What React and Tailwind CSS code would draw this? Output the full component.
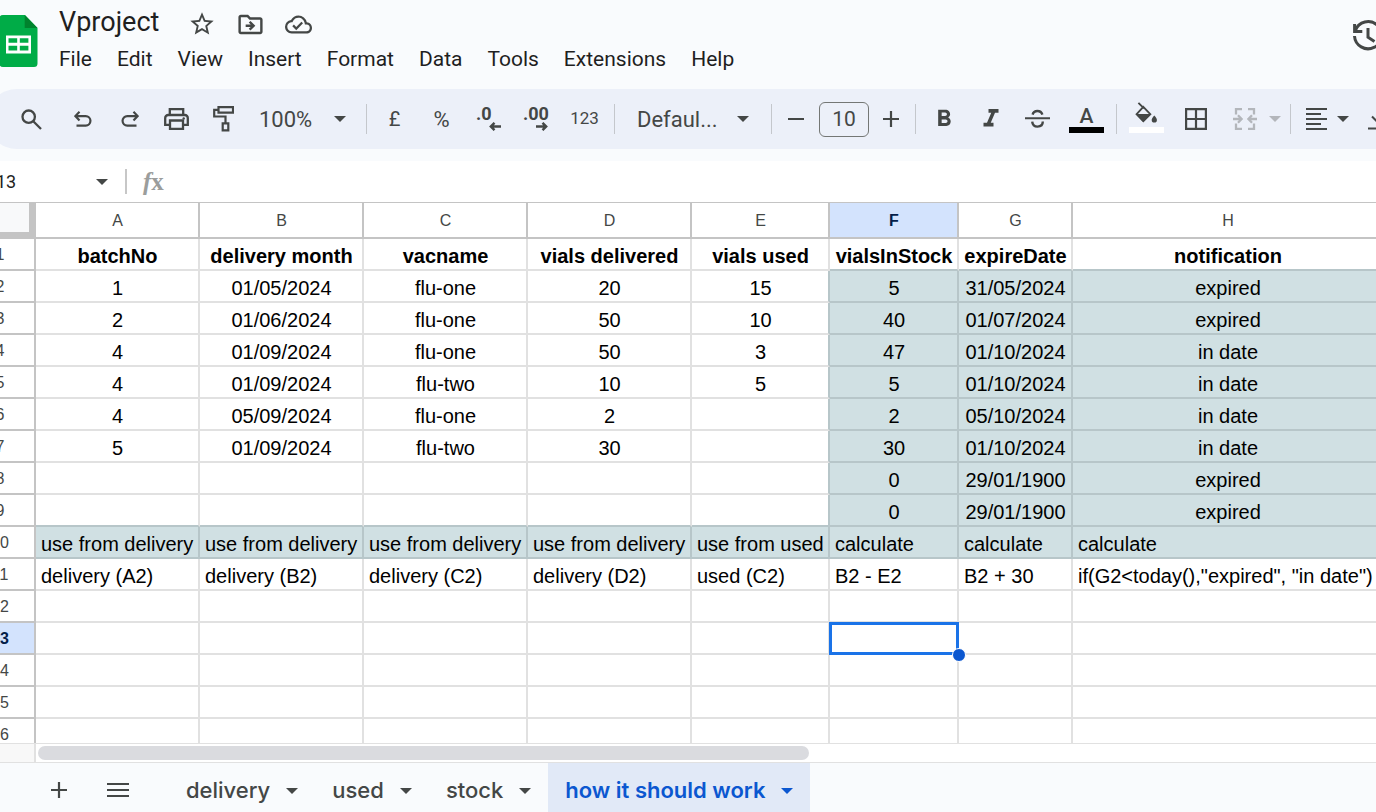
import React from "react";
import { MdFormatBold, MdFormatItalic, MdStarOutline, MdOutlineDriveFileMove, MdOutlineCloudDone } from "react-icons/md";

const columns = [
  { id: "A", width: "w-[164px]" },
  { id: "B", width: "w-[164px]" },
  { id: "C", width: "w-[164px]" },
  { id: "D", width: "w-[164px]" },
  { id: "E", width: "w-[138px]" },
  { id: "F", width: "w-[129px]" },
  { id: "G", width: "w-[114px]" },
  { id: "H", width: "w-[311px]" },
];

const rows = [
  ["batchNo", "delivery month", "vacname", "vials delivered", "vials used", "vialsInStock", "expireDate", "notification"],
  ["1", "01/05/2024", "flu-one", "20", "15", "5", "31/05/2024", "expired"],
  ["2", "01/06/2024", "flu-one", "50", "10", "40", "01/07/2024", "expired"],
  ["4", "01/09/2024", "flu-one", "50", "3", "47", "01/10/2024", "in date"],
  ["4", "01/09/2024", "flu-two", "10", "5", "5", "01/10/2024", "in date"],
  ["4", "05/09/2024", "flu-one", "2", "", "2", "05/10/2024", "in date"],
  ["5", "01/09/2024", "flu-two", "30", "", "30", "01/10/2024", "in date"],
  ["", "", "", "", "", "0", "29/01/1900", "expired"],
  ["", "", "", "", "", "0", "29/01/1900", "expired"],
  ["use from delivery", "use from delivery", "use from delivery", "use from delivery", "use from used", "calculate", "calculate", "calculate"],
  ["delivery (A2)", "delivery (B2)", "delivery (C2)", "delivery (D2)", "used (C2)", "B2 - E2", "B2 + 30", 'if(G2<today(),"expired", "in date")'],
  [], [], [], [], [],
];

const menus = ["File", "Edit", "View", "Insert", "Format", "Data", "Tools", "Extensions", "Help"];

const isShaded = (r, c) => r === 9 || (r >= 1 && r <= 8 && c >= 5);
const isSelected = (r, c) => r === 12 && c === 5;

function cellClass(r, c) {
  const here = isShaded(r, c);
  const right = here || isShaded(r, c + 1) ? "border-r-[#b7c6c9]" : "border-r-[#e1e1e1]";
  const bottom = here || isShaded(r + 1, c) ? "border-b-[#b7c6c9]" : "border-b-[#e1e1e1]";
  const align = r < 9 ? "text-center pl-px pr-0" : "text-left pl-[5px] pr-0";
  const weight = r === 0 ? "font-bold" : "font-normal";
  return `relative border-r-2 border-b-2 pb-px align-bottom whitespace-nowrap leading-6 ${right} ${bottom} ${align} ${weight} ${here ? "bg-[#d0e0e3]" : "bg-white"}`;
}

function Caret({ className = "" }) {
  return (
    <svg className={`h-[6px] w-[12px] shrink-0 ${className}`} viewBox="0 0 12 6" fill="currentColor" aria-hidden="true">
      <path d="M0 0h12L6 6z" />
    </svg>
  );
}

function Icon({ w, h, children, sw = 2 }) {
  return (
    <svg className="shrink-0" width={w} height={h} viewBox={`0 0 ${w} ${h}`} fill="none" stroke="currentColor" strokeWidth={sw} aria-hidden="true">
      {children}
    </svg>
  );
}

function Tool({ label, className = "w-[47px]", children }) {
  return (
    <button type="button" aria-label={label} className={`flex h-full shrink-0 items-center justify-center ${className}`}>
      {children}
    </button>
  );
}

function Separator() {
  return <span className="mx-1 h-[30px] w-px shrink-0 bg-[#c4c7cc]" />;
}

function Header() {
  return (
    <header className="flex h-[89px] shrink-0 items-start">
      <svg className="mt-[15px] h-[52px] w-[38px] shrink-0" viewBox="0 0 38 52" aria-hidden="true">
        <path d="M3 0H25L37.5 13V48.5a3.5 3.5 0 0 1-3.5 3.5H3a3.5 3.5 0 0 1-3.5-3.5V3.5A3.5 3.5 0 0 1 3 0z" fill="#00ac47" />
        <path d="M24.7 0 37.5 13H24.7z" fill="#00832d" />
        <path fillRule="evenodd" fill="#fff" d="M6 20.5h25v18H6zM8.5 23.2v4.6h8.7v-4.6zM19.8 23.2v4.6h8.6v-4.6zM8.5 30.7v4.8h8.7v-4.8zM19.8 30.7v4.8h8.6v-4.8z" />
      </svg>
      <div className="ml-5 min-w-0 grow pt-1">
        <div className="flex h-9 items-center text-[#444746]">
          <h1 className="pl-px font-[Roboto,sans-serif] text-[27px] leading-9 text-[#1f1f1f]">Vproject</h1>
          <button type="button" aria-label="Star" className="ml-[29px] mt-1"><MdStarOutline size={28} /></button>
          <button type="button" aria-label="Move" className="ml-5 mt-1"><MdOutlineDriveFileMove size={29} /></button>
          <button type="button" aria-label="Document status" className="ml-5 mt-1"><MdOutlineCloudDone size={27} /></button>
        </div>
        <nav className="flex gap-[25px] pl-px pt-[5px] font-[Roboto,sans-serif] text-[21px] leading-7 text-[#1f1f1f]">
          {menus.map((m) => <button type="button" key={m}>{m}</button>)}
        </nav>
      </div>
      <button type="button" aria-label="Version history" className="-mr-2 mt-5 shrink-0 text-[#444746]">
        <Icon w={32} h={32} sw={3}>
          <path d="M3.3 10.5A13.6 13.6 0 1 1 2.5 16" />
          <path d="M2.6 4V11.6H10.3M16 8V17.2L22.5 21.4" />
        </Icon>
      </button>
    </header>
  );
}

function Toolbar() {
  return (
    <div role="toolbar" aria-label="Main" className="-ml-[13px] flex h-[60px] shrink-0 items-center overflow-hidden rounded-l-full bg-[#ecf0f9] pl-[21px] font-[Roboto,sans-serif] text-[21px] text-[#444746]">
      <Tool label="Search"><Icon w={21} h={21} sw={2.3}><circle cx="7.7" cy="7.7" r="6.2" /><path d="M12 12l8 8" /></Icon></Tool>
      <Tool label="Undo" className="ml-1 w-[47px]"><Icon w={18} h={16} sw={2.2}><path d="M5.5 .8 1.4 5.1 5.5 9.4M1.5 5.1H11.7a4.75 4.75 0 0 1 0 9.5H2.5" /></Icon></Tool>
      <Tool label="Redo"><Icon w={18} h={16} sw={2.2}><path d="M12.5 .8 16.6 5.1 12.5 9.4M16.5 5.1H6.3a4.75 4.75 0 0 0 0 9.5H15.5" /></Icon></Tool>
      <Tool label="Print">
        <Icon w={25} h={22} sw={2.3}>
          <path d="M5.8 6.8V1.1H19.2V6.8M6 16.8H1.2V10a3 3 0 0 1 3-3H20.8a3 3 0 0 1 3 3V16.8H19M6 12.5H19V20.8H6z" />
          <circle cx="19.7" cy="10.4" r="1.2" fill="currentColor" stroke="none" />
        </Icon>
      </Tool>
      <Tool label="Paint format" className="w-[46px]"><Icon w={21} h={26} sw={2.2}><path d="M5.5 1.1H20V6.6H5.5zM5.5 3.8H1.2V10.5H12.5V17M9.7 17.4h5.6v7H9.7z" /></Icon></Tool>
      <label className="relative flex h-full w-[116px] shrink-0 items-center">
        <select aria-label="Zoom" defaultValue="100%" className="h-full w-full appearance-none bg-transparent pl-[13px] text-[22px]">
          <option>100%</option>
        </select>
        <Caret className="pointer-events-none absolute right-4" />
      </label>
      <Separator />
      <Tool label="Format as currency"><span className="text-[20px]">£</span></Tool>
      <Tool label="Format as percent"><span className="text-[22px]">%</span></Tool>
      <Tool label="Decrease decimal places">
        <span className="flex w-[25px] flex-col pb-px">
          <span className="text-left text-[18px] font-bold leading-4">.0</span>
          <span className="flex justify-end"><Icon w={12} h={9} sw={2.4}><path d="M12 4.5H2M5.5 .8 1.8 4.5 5.5 8.2" /></Icon></span>
        </span>
      </Tool>
      <Tool label="Increase decimal places">
        <span className="flex w-[25px] flex-col pb-px">
          <span className="text-left text-[18px] font-bold leading-4">.00</span>
          <span className="flex justify-end"><Icon w={12} h={9} sw={2.4}><path d="M0 4.5H10M6.5 .8 10.2 4.5 6.5 8.2" /></Icon></span>
        </span>
      </Tool>
      <Tool label="More formats" className="w-[51px]"><span className="text-[17px]">123</span></Tool>
      <Separator />
      <label className="relative flex h-full w-[148px] shrink-0 items-center">
        <select aria-label="Font" defaultValue="Defaul..." className="h-full w-full appearance-none bg-transparent pl-[18px] text-[22px]">
          <option>Defaul...</option>
        </select>
        <Caret className="pointer-events-none absolute right-[18px]" />
      </label>
      <Separator />
      <div className="flex h-full shrink-0 items-center gap-1 pr-[3px]">
        <Tool label="Decrease font size" className="w-[35px] pl-1"><Icon w={16} h={16} sw={2.2}><path d="M0 8H16" /></Icon></Tool>
        <input aria-label="Font size" defaultValue="10" className="ml-1 h-[35px] w-[50px] rounded-md border border-[#747775] bg-transparent text-center text-[21px]" />
        <Tool label="Increase font size" className="w-[35px]"><Icon w={16} h={16} sw={2.2}><path d="M0 8H16M8 0V16" /></Icon></Tool>
      </div>
      <Separator />
      <Tool label="Bold"><MdFormatBold size={28} /></Tool>
      <Tool label="Italic"><MdFormatItalic size={30} /></Tool>
      <Tool label="Strikethrough">
        <Icon w={25} h={20} sw={2.4}>
          <path d="M0 9.3H25" strokeWidth="2" />
          <path d="M7.6 5.6C8.2 3.2 10 2 12.4 2s4.2 1.2 5 3.6M7.2 12.6c.3 3.4 2.5 5 5.4 5s5.2-1.5 5.2-5" />
        </Icon>
      </Tool>
      <Tool label="Text color" className="w-[51px]">
        <span className="flex flex-col items-center gap-px">
          <span className="text-[21px] font-medium leading-5">A</span>
          <span className="h-[6px] w-[35px] bg-black" />
        </span>
      </Tool>
      <Separator />
      <Tool label="Fill color" className="w-[51px]">
        <span className="flex flex-col items-center gap-1 pb-1">
          <Icon w={23} h={21} sw={1.9}>
            <path d="M8.3 4.8 15.3 12.2 8.3 19.2 1.6 12.2zM3.4 .8 9 6.4" />
            <path d="M1.2 12h14.4L8.3 20z" fill="currentColor" stroke="none" />
            <path d="M19.3 13.6c1.7 2 2.6 3.2 2.6 4.4a2.6 2.6 0 0 1-5.2 0c0-1.2.9-2.4 2.6-4.4z" fill="currentColor" stroke="none" />
          </Icon>
          <span className="h-[6px] w-[35px] bg-white" />
        </span>
      </Tool>
      <Tool label="Borders"><Icon w={22} h={22} sw={2.2}><path d="M1.1 1.1H20.9V20.9H1.1zM11 1V21M1 11H21" /></Icon></Tool>
      <button type="button" disabled aria-label="Merge cells" className="flex h-full shrink-0 items-center gap-3 pl-[14px] pr-[5px] text-[#b3b6bb]">
        <Icon w={24} h={22} sw={2.3}><path d="M9 1.2H3V6.5M9 20.8H3V15.5M15 1.2H21V6.5M15 20.8H21V15.5M0 11H8M5 7.3 8.6 11 5 14.7M24 11H16M19 7.3 15.4 11 19 14.7" /></Icon>
        <Caret />
      </button>
      <Separator />
      <button type="button" aria-label="Horizontal align" className="flex h-full shrink-0 items-center gap-[10px] pl-[11px] pr-2">
        <Icon w={21} h={22}><path d="M0 1H21M0 6H15M0 11H21M0 16H15M0 21H21" /></Icon>
        <Caret />
      </button>
      <button type="button" aria-label="Vertical align" className="flex h-full shrink-0 items-center pl-[11px]">
        <Icon w={21} h={22}><path d="M0 20.5H21M10.5 0V14M4 8.5 10.5 15 17 8.5" /></Icon>
      </button>
    </div>
  );
}

function FormulaBar() {
  return (
    <div className="mt-3 flex h-[41px] shrink-0 items-center bg-white">
      <label className="-ml-[14px] flex w-[122px] shrink-0 items-center text-[#444746]">
        <input aria-label="Name box" defaultValue="F13" className="w-full min-w-0 bg-transparent font-[Roboto,sans-serif] text-[18px] text-[#1f1f1f] outline-none" />
        <Caret />
      </label>
      <span className="ml-[17px] h-[25px] w-[2px] shrink-0 bg-[#c7c7c7]" />
      <label htmlFor="formula" className="ml-4 shrink-0 font-['Liberation_Serif',serif] text-[25px] font-bold leading-6 text-[#9b9d9c]">
        <i>f</i>x
      </label>
      <input id="formula" className="ml-3 min-w-0 grow bg-transparent outline-none" />
    </div>
  );
}

function Sheet() {
  return (
    <main className="min-h-0 grow overflow-hidden border-t border-[#c4c4c4] bg-white">
      <table className="-ml-[34px] w-[1418px] table-fixed border-separate border-spacing-0 font-['Liberation_Sans',Arial,sans-serif] text-[20px] text-black">
        <colgroup>
          <col className="w-[70px]" />
          {columns.map((c) => <col key={c.id} className={c.width} />)}
        </colgroup>
        <thead>
          <tr className="h-9 text-[16px]">
            <td className="border-r-[7px] border-b-[7px] border-[#c4c4c4] bg-[#f8f9fa] p-0" />
            {columns.map((c) => (
              <th
                key={c.id}
                scope="col"
                className={`border-r-2 border-b-2 border-[#c4c4c4] p-0 pt-[2px] pl-px ${c.id === "F" ? "bg-[#d3e3fd] font-bold text-[#041e49]" : "font-normal text-[#444746]"}`}
              >
                {c.id}
              </th>
            ))}
          </tr>
        </thead>
        <tbody>
          {rows.map((cells, r) => (
            <tr key={r} className="h-8">
              <th
                scope="row"
                className={`border-r-2 border-b-2 border-[#c4c4c4] p-0 pt-[2px] text-[16px] leading-6 ${r === 12 ? "bg-[#d3e3fd] font-bold text-[#041e49]" : "font-normal text-[#444746]"}`}
              >
                {r + 1}
              </th>
              {columns.map((c, i) => (
                <td key={c.id} className={cellClass(r, i)}>
                  {cells[i]}
                  {isSelected(r, i) && (
                    <span className="absolute -top-px -right-[2px] -bottom-[2px] -left-px z-10 border-3 border-[#1a73e8]">
                      <span className="absolute -right-[10px] -bottom-[10px] size-[14px] rounded-full border border-white bg-[#0b57d0]" />
                    </span>
                  )}
                </td>
              ))}
            </tr>
          ))}
        </tbody>
      </table>
    </main>
  );
}

function SheetTab({ name, active }) {
  return (
    <button
      type="button"
      aria-pressed={!!active}
      className={`flex shrink-0 items-center gap-4 px-[17px] pt-[6px] ${active ? "bg-[#e1e9f7] font-semibold text-[#0b57d0]" : "font-medium text-[#444746]"}`}
    >
      {name}
      <Caret />
    </button>
  );
}

function Footer() {
  return (
    <footer className="shrink-0">
      <div className="flex h-[19px] border-t border-[#e1e1e1] bg-white">
        <span className="mr-[2px] w-9 shrink-0 border-r-2 border-[#e1e1e1] bg-[#f8f8f8]" />
        <span className="mt-[2px] h-[14px] w-[56%] rounded-full bg-[#dadbdf]" />
      </div>
      <div className="flex h-[50px] border-t border-[#e1e1e1] bg-[#f9fbfd] font-[Inter,sans-serif] text-[22px] text-[#444746]">
        <button type="button" aria-label="Add sheet" className="flex w-[67px] shrink-0 items-center justify-end pt-1 pl-8">
          <Icon w={16} h={16} sw={2.2}><path d="M0 8H16M8 0V16" /></Icon>
        </button>
        <button type="button" aria-label="All sheets" className="mr-10 flex w-[62px] shrink-0 items-center justify-end pt-1">
          <Icon w={22} h={16} sw={2.2}><path d="M0 2H22M0 8H22M0 14H22" /></Icon>
        </button>
        <SheetTab name="delivery" />
        <SheetTab name="used" />
        <SheetTab name="stock" />
        <SheetTab name="how it should work" active />
      </div>
    </footer>
  );
}

export default function App() {
  return (
    <div className="flex h-screen flex-col overflow-hidden bg-[#f9fbfd]">
      <Header />
      <Toolbar />
      <FormulaBar />
      <Sheet />
      <Footer />
    </div>
  );
}
